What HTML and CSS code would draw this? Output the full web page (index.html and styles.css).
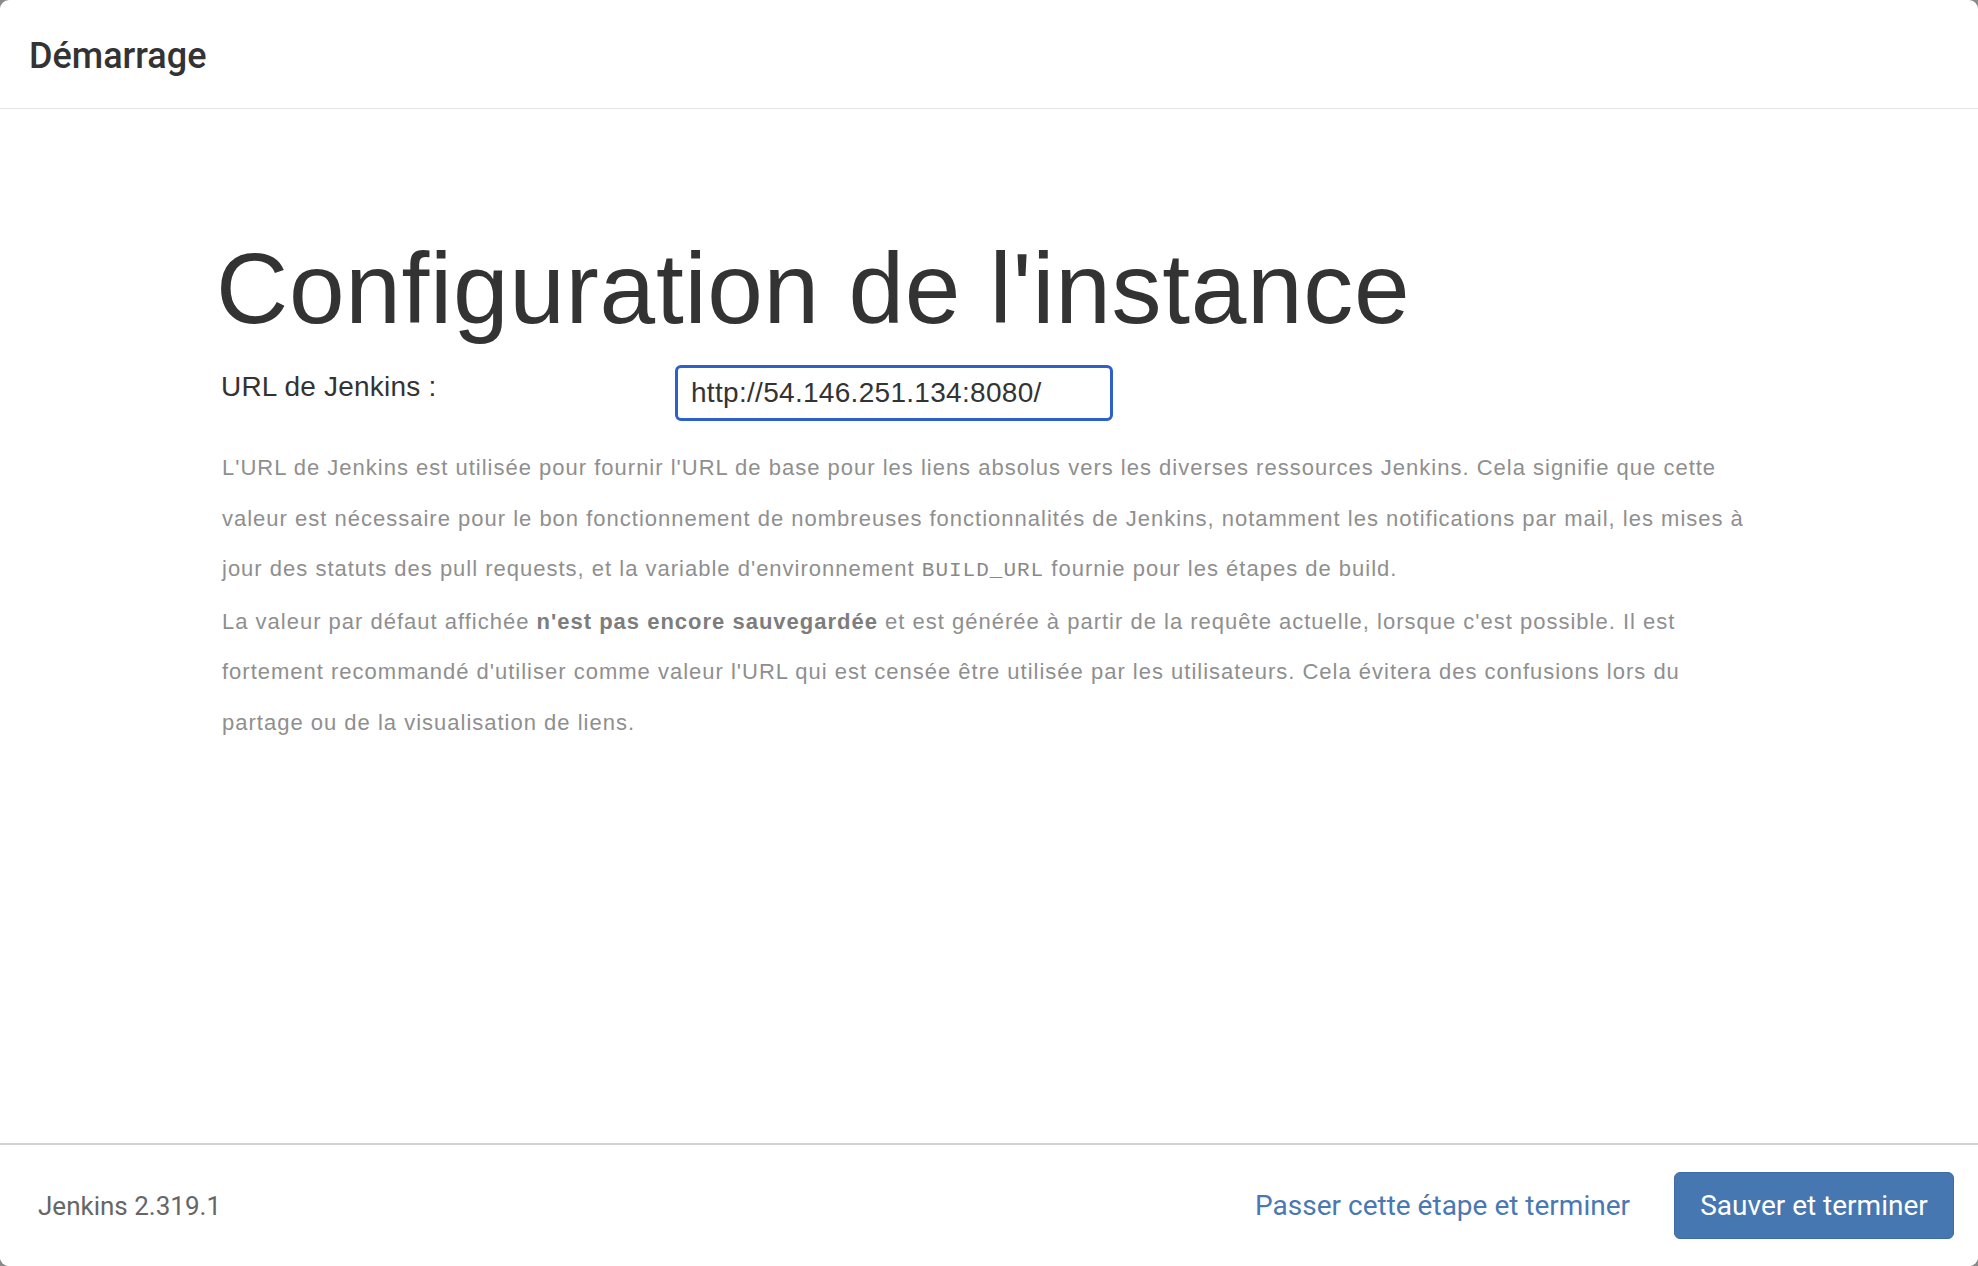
FILE: index.html
```html
<!DOCTYPE html>
<html lang="fr">
<head>
<meta charset="utf-8">
<title>Démarrage</title>
<link rel="stylesheet" href="styles.css">
</head>
<body>
<div class="modal">
  <header class="modal-header">
    <h4 class="modal-title">Démarrage</h4>
  </header>
  <main class="modal-body">
    <div class="container">
      <h1 class="page-title">Configuration de l'instance</h1>
      <div class="form-row">
        <label class="form-label" for="root-url">URL de Jenkins :</label>
        <input class="form-input" id="root-url" type="text" value="http://54.146.251.134:8080/">
      </div>
      <div class="help">
        <p class="help-p">L'URL de Jenkins est utilisée pour fournir l'URL de base pour les liens absolus vers les diverses ressources Jenkins. Cela signifie que cette valeur est nécessaire pour le bon fonctionnement de nombreuses fonctionnalités de Jenkins, notamment les notifications par mail, les mises à jour des statuts des pull requests, et la variable d'environnement <code class="code">BUILD_URL</code> fournie pour les étapes de build.</p>
        <p class="help-p">La valeur par défaut affichée <strong class="strong">n'est pas encore sauvegardée</strong> et est générée à partir de la requête actuelle, lorsque c'est possible. Il est fortement recommandé d'utiliser comme valeur l'URL qui est censée être utilisée par les utilisateurs. Cela évitera des confusions lors du partage ou de la visualisation de liens.</p>
      </div>
    </div>
  </main>
  <footer class="modal-footer">
    <div class="version">Jenkins 2.319.1</div>
    <div class="actions">
      <a class="skip-link" href="#">Passer cette étape et terminer</a>
      <button class="btn-primary" type="button">Sauver et terminer</button>
    </div>
  </footer>
</div>
</body>
</html>
```
FILE: styles.css
```css
html, body {
  margin: 0;
  padding: 0;
}
body {
  background: #8a8a8a;
  width: 1978px;
  height: 1266px;
  overflow: hidden;
}
.modal {
  height: 1266px;
  background: #ffffff;
  border-radius: 9px;
  overflow: hidden;
  display: flex;
  flex-direction: column;
}
.modal-header {
  height: 108px;
  border-bottom: 1px solid #e5e5e5;
  box-sizing: content-box;
  flex: none;
}
.modal-title {
  margin: 0;
  padding: 36px 0 0 29px;
  font-family: Roboto, "Liberation Sans", sans-serif;
  font-weight: 500;
  font-size: 36px;
  line-height: 41px;
  color: #333333;
}
.modal-body {
  flex: 1;
}
.container {
  width: 1554px;
  margin: 0 auto;
  padding-top: 124px;
  font-family: "Liberation Sans", Arial, sans-serif;
}
.page-title {
  margin: 0 0 0 4px;
  font-weight: 400;
  font-size: 100px;
  line-height: 1.1;
  color: #333333;
  letter-spacing: 0.7px;
}
.form-row {
  display: grid;
  grid-template-columns: 455px 438px;
  margin: 22px 8px 0;
}
.form-label {
  margin: 5px 0 0 1px;
  font-size: 28px;
  line-height: 1.2;
  letter-spacing: 0.2px;
  color: #333333;
}
.form-input {
  box-sizing: border-box;
  width: 438px;
  height: 56px;
  margin: 0;
  padding: 0 0 0 13px;
  border: 3px solid #2d60cb;
  border-radius: 6px;
  font-family: "Liberation Sans", Arial, sans-serif;
  font-size: 28px;
  letter-spacing: 0.3px;
  color: #333333;
  outline: none;
  background: #ffffff;
}
.help {
  margin: 22px 8px 0 10px;
  color: #8f8f8f;
  font-size: 22px;
  letter-spacing: 1px;
  line-height: 50.5px;
}
.help-p {
  margin: 0;
}
.code {
  font-family: "Liberation Mono", "Courier New", monospace;
  font-size: 21px;
  color: #888888;
}
.strong {
  font-weight: 700;
  color: #7d7d7d;
}
.modal-footer {
  flex: none;
  height: 121px;
  border-top: 2px solid #d2d2d2;
  background: #ffffff;
  display: flex;
  align-items: center;
  justify-content: space-between;
  padding: 0 24px 0 38px;
  font-family: Roboto, "Liberation Sans", sans-serif;
}
.version {
  font-size: 26px;
  color: #666666;
}
.actions {
  display: flex;
  align-items: center;
  gap: 44px;
}
.skip-link {
  font-size: 28px;
  color: #4a78b2;
  text-decoration: none;
}
.btn-primary {
  box-sizing: border-box;
  width: 280px;
  height: 67px;
  border: 1px solid #3e6ca4;
  border-radius: 6px;
  background: #4677b0;
  color: #ffffff;
  font-family: Roboto, "Liberation Sans", sans-serif;
  font-size: 28px;
  padding: 0;
  cursor: pointer;
}
```
